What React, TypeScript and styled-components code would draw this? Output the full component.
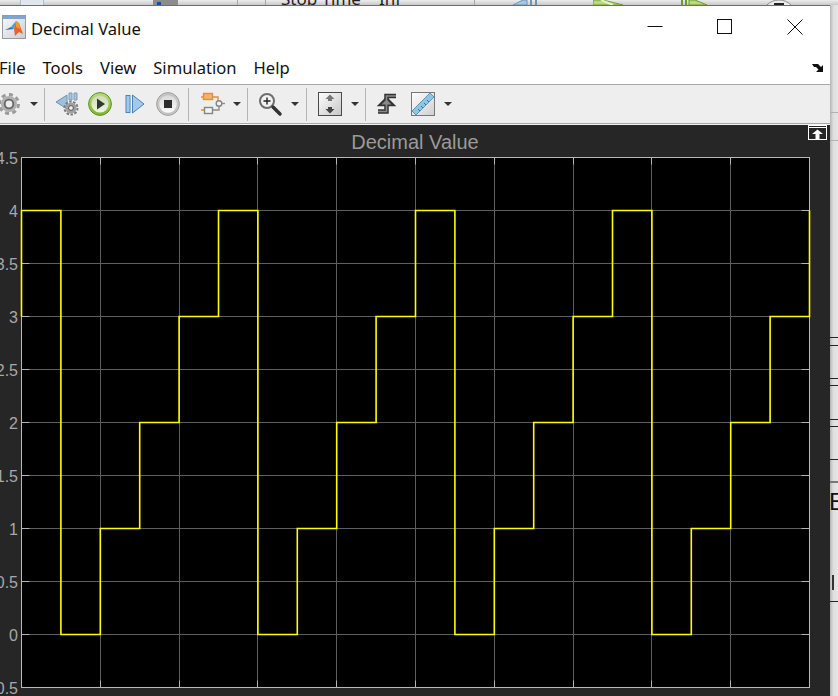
import React from 'react';
import styled, { createGlobalStyle } from 'styled-components';

const GlobalStyle = createGlobalStyle`
  html, body {
    margin: 0;
    padding: 0;
    width: 838px;
    height: 696px;
    overflow: hidden;
    background: #dcdcdc;
  }
`;

const App = () => {
  return (
    <Page>
      <GlobalStyle />
      <BehindStrip>
        <PeekBox $gap={20} />
        <PeekDark $gap={109}>
          <PeekDot />
        </PeekDark>
        <PeekDivider $gap={59} />
        <PeekDivider $gap={27} />
        <PeekText $gap={15} $width={98}>Stop Time</PeekText>
        <PeekText $gap={0} $width={95}>Inf</PeekText>
        <PeekDivider $gap={0} />
        <PeekIcon $gap={38} viewBox="0 0 30 5" $width={30}>
          <path d="M0 5 L10 0 H14 V5 Z" fill="#a8c8e0" stroke="#6d94b5" />
          <path d="M18 0 V5 M23 0 V5" stroke="#6d94b5" strokeWidth="2" />
        </PeekIcon>
        <PeekIcon $gap={50} viewBox="0 0 32 5" $width={32}>
          <path d="M0 0 H10 L30 5 H0 Z" fill="#b7da7c" stroke="#6d9a35" />
          <path d="M8 0 L20 5" stroke="#e4f2c8" strokeWidth="2" />
        </PeekIcon>
        <PeekIcon $gap={56} viewBox="0 0 27 5" $width={27}>
          <path d="M1 0 V5 M5 0 V5" stroke="#6d9a35" strokeWidth="2" />
          <path d="M8 0 H14 L26 5 H8 Z" fill="#b7da7c" stroke="#6d9a35" />
        </PeekIcon>
        <PeekIcon $gap={53} viewBox="0 0 36 5" $width={36}>
          <circle cx="18" cy="17" r="17" fill="#ececec" stroke="#8a8a8a" />
          <rect x="13" y="3" width="10" height="3" fill="#222" />
        </PeekIcon>
      </BehindStrip>

      <Body>
        <ScopeWindow>
          <TitleBar>
            <TitleLeft>
              <MatlabIcon />
              <TitleText>Decimal Value</TitleText>
            </TitleLeft>
            <WindowControls>
              <ControlButton>
                <svg width="16" height="16" viewBox="0 0 16 16">
                  <path d="M0.5 7.5 H15.5" stroke="#111" />
                </svg>
              </ControlButton>
              <ControlButton>
                <svg width="16" height="16" viewBox="0 0 16 16">
                  <rect x="0.5" y="0.5" width="14" height="14" fill="none" stroke="#111" />
                </svg>
              </ControlButton>
              <ControlButton>
                <svg width="16" height="16" viewBox="0 0 16 16">
                  <path d="M0.5 0.5 L15.5 15.5 M15.5 0.5 L0.5 15.5" stroke="#111" />
                </svg>
              </ControlButton>
            </WindowControls>
          </TitleBar>

          <MenuBar>
            <MenuList>
              <MenuItem>File</MenuItem>
              <MenuItem>Tools</MenuItem>
              <MenuItem>View</MenuItem>
              <MenuItem>Simulation</MenuItem>
              <MenuItem>Help</MenuItem>
            </MenuList>
            <svg width="12" height="10" viewBox="0 0 12 10">
              <path d="M0 1 H6 L9 4 L11 2 V9 H4 L6.5 6.5 L4 4 H2 Z" fill="#111" />
            </svg>
          </MenuBar>

          <Toolbar>
            <ToolIcon $gap={-2}><GearIcon /></ToolIcon>
            <Caret $gap={8} />
            <ToolSeparator $gap={6} />
            <ToolIcon $gap={10}><StepBackIcon /></ToolIcon>
            <ToolIcon $gap={9}><PlayIcon /></ToolIcon>
            <ToolIcon $gap={11}><StepForwardIcon /></ToolIcon>
            <ToolIcon $gap={9}><StopIcon /></ToolIcon>
            <ToolSeparator $gap={8} />
            <ToolIcon $gap={12}><BlockIcon /></ToolIcon>
            <Caret $gap={8} />
            <ToolSeparator $gap={6} />
            <ToolIcon $gap={10}><MagnifierIcon /></ToolIcon>
            <Caret $gap={9} />
            <ToolSeparator $gap={7} />
            <ToolIcon $gap={11}><FitIcon /></ToolIcon>
            <Caret $gap={9} />
            <ToolSeparator $gap={6} />
            <ToolIcon $gap={9}><TriggerIcon /></ToolIcon>
            <ToolIcon $gap={12}><RulerIcon /></ToolIcon>
            <Caret $gap={9} />
          </Toolbar>

          <ScopePanel>
            <UndockButton>
              <svg width="17" height="13" viewBox="0 0 17 13">
                <path d="M0 1.5 H17" stroke="#fff" />
                <path d="M8.5 3.5 L14 8 H10.5 V13 H6.5 V8 H3 Z" fill="#fff" />
              </svg>
            </UndockButton>
            <PlotTitle>Decimal Value</PlotTitle>
            <ScopePlot />
          </ScopePanel>
        </ScopeWindow>

        <SideStrip>
          {sideRules.map((rule, i) => (
            <SideRule key={i} $gap={rule.gap} $color={rule.color} $height={rule.height} />
          ))}
          <SideLetter>E</SideLetter>
          <SideBar />
          <SideRule $gap={11} $color="#222" $height={1} />
        </SideStrip>
      </Body>
    </Page>
  );
};
export default App;

const sideRules = [
  { gap: 107, color: '#b0b0b0', height: 1 },
  { gap: 27, color: '#b0b0b0', height: 1 },
  { gap: 196, color: '#222', height: 1 },
  { gap: 7, color: '#222', height: 1 },
  { gap: 32, color: '#222', height: 1 },
  { gap: 6, color: '#222', height: 1 },
  { gap: 33, color: '#222', height: 1 },
  { gap: 6, color: '#222', height: 1 },
  { gap: 32, color: '#222', height: 1 },
  { gap: 21, color: '#777', height: 2 },
];

// plot geometry, same numbers as the page coordinates
const LEFT = 21.5;
const RIGHT = 809.5;
const TOP = 157.5;
const BOTTOM = 687.5;
const X_STEP = (RIGHT - LEFT) / 10;
const Y_STEP = (BOTTOM - TOP) / 10;

const gridX = Array.from({ length: 9 }, (_, i) => Math.round(LEFT + X_STEP * (i + 1) - 0.5) + 0.5);
const gridY = Array.from({ length: 9 }, (_, i) => Math.round(TOP + Y_STEP * (i + 1) - 0.5) + 0.5);
const yLabels = ['4.5', '4', '3.5', '3', '2.5', '2', '1.5', '1', '0.5', '0', '-0.5'];

const valueY = (v: number) => TOP + (4.5 - v) * Y_STEP * 2;

const signalPath = () => {
  const sequence = [4, 0, 1, 2, 3];
  let d = `M${LEFT} ${valueY(3)}`;
  for (let i = 0; i < 20; i++) {
    const v = sequence[i % 5];
    const x1 = LEFT + (i * X_STEP) / 2;
    const x2 = LEFT + ((i + 1) * X_STEP) / 2;
    d += ` L${x1} ${valueY(v)} L${x2} ${valueY(v)}`;
  }
  return `${d} L${RIGHT} ${valueY(4)}`;
};

const ScopePlot = () => (
  <PlotSvg viewBox={`0 157 830 539`}>
    <rect x={LEFT} y={TOP} width={RIGHT - LEFT} height={BOTTOM - TOP} fill="#000" />
    {gridX.map((x) => (
      <g key={x}>
        <path d={`M${x} ${TOP} V${BOTTOM}`} stroke="#5f5f5f" />
        <path d={`M${x} ${TOP} v7 M${x} ${BOTTOM} v-7`} stroke="#b4b4b4" />
      </g>
    ))}
    {gridY.map((y) => (
      <g key={y}>
        <path d={`M${LEFT} ${y} H${RIGHT}`} stroke="#5f5f5f" />
        <path d={`M${LEFT} ${y} h8 M${RIGHT} ${y} h-8`} stroke="#b4b4b4" />
      </g>
    ))}
    <rect x={LEFT} y={TOP} width={RIGHT - LEFT} height={BOTTOM - TOP} fill="none" stroke="#b8b8b8" />
    <path d={signalPath()} fill="none" stroke="#ffff00" strokeWidth="1.6" />
    {yLabels.map((label, i) => (
      <TickLabel key={label} x="18" y={TOP + i * Y_STEP + 6} textAnchor="end">
        {label}
      </TickLabel>
    ))}
  </PlotSvg>
);

const MatlabIcon = () => (
  <svg width="24" height="24" viewBox="0 0 24 24">
    <defs>
      <linearGradient id="boxFill" x1="0" y1="0" x2="1" y2="1">
        <stop offset="0" stopColor="#fafafa" />
        <stop offset="1" stopColor="#c9ced6" />
      </linearGradient>
    </defs>
    <rect x="0.5" y="0.5" width="23" height="23" fill="url(#boxFill)" stroke="#9a9a9a" />
    <rect x="1" y="1" width="22" height="3" fill="#7ea6cf" />
    <path d="M3 15 L9 12 L12 14 Z" fill="#2f6fb5" />
    <path d="M9 12 L14 6 L12 14 Z" fill="#4f9bd0" />
    <path d="M14 6 L17 8 L21 19 L17 17 L13 21 L12 14 Z" fill="#e8622a" />
    <path d="M14 6 L17 8 L18 14 L14 12 Z" fill="#f29a2e" />
  </svg>
);

const GearIcon = () => (
  <svg width="24" height="24" viewBox="0 0 24 24">
    <circle cx="11" cy="12" r="9.5" fill="none" stroke="#9a9a9a" strokeWidth="3" strokeDasharray="4 3.4" />
    <circle cx="11" cy="12" r="8" fill="#b0b0b0" />
    <circle cx="11" cy="12" r="5.2" fill="#666" />
    <circle cx="11" cy="12" r="3.4" fill="#ececec" />
  </svg>
);

const StepBackIcon = () => (
  <svg width="26" height="24" viewBox="0 0 26 24">
    <path d="M14 1 H17 V8 H14 Z M19 1 H22 V8 H19 Z" fill="#a9c6df" stroke="#7b9ab5" />
    <path d="M12 3 V17 L1 10 Z" fill="#9ec0dd" stroke="#7094b4" />
    <circle cx="16" cy="16" r="6.5" fill="none" stroke="#7c7c7c" strokeWidth="2" strokeDasharray="2.5 1.5" />
    <circle cx="16" cy="16" r="5.6" fill="#a0a0a0" />
    <circle cx="16" cy="16" r="2.4" fill="#efefef" stroke="#555" />
  </svg>
);

const PlayIcon = () => (
  <svg width="24" height="24" viewBox="0 0 24 24">
    <defs>
      <linearGradient id="playRing" x1="0" y1="0" x2="0" y2="1">
        <stop offset="0" stopColor="#b9dc78" />
        <stop offset="1" stopColor="#7fb52f" />
      </linearGradient>
      <linearGradient id="playCore" x1="0" y1="0" x2="0" y2="1">
        <stop offset="0" stopColor="#cfd8bd" />
        <stop offset="1" stopColor="#f1f5e2" />
      </linearGradient>
    </defs>
    <circle cx="12" cy="12" r="11.4" fill="url(#playRing)" stroke="#5f8f25" />
    <circle cx="12" cy="12" r="8.6" fill="url(#playCore)" />
    <path d="M9 6.5 L17 12 L9 17.5 Z" fill="#2f3a2a" />
  </svg>
);

const StepForwardIcon = () => (
  <svg width="24" height="24" viewBox="0 0 24 24">
    <rect x="3" y="3.5" width="4" height="17" fill="#a3c9ea" stroke="#4a84bb" />
    <path d="M9.5 3 L21 12 L9.5 21 Z" fill="#a3c9ea" stroke="#4a84bb" />
  </svg>
);

const StopIcon = () => (
  <svg width="24" height="24" viewBox="0 0 24 24">
    <defs>
      <linearGradient id="stopCore" x1="0" y1="0" x2="0" y2="1">
        <stop offset="0" stopColor="#d8d8d8" />
        <stop offset="1" stopColor="#fbfbfb" />
      </linearGradient>
    </defs>
    <circle cx="12" cy="12" r="11.4" fill="#c4c4c4" stroke="#a2a2a2" />
    <circle cx="12" cy="12" r="8.8" fill="url(#stopCore)" />
    <rect x="8" y="8" width="8" height="8" fill="#2d2d2d" />
  </svg>
);

const BlockIcon = () => (
  <svg width="24" height="24" viewBox="0 0 24 24">
    <path d="M10 5 H17 V9" fill="none" stroke="#e08f3a" strokeWidth="1.4" />
    <path d="M12 18 H18 V14" fill="none" stroke="#8d8d8d" strokeWidth="1.4" />
    <path d="M0 5 H2 M0 18 H3" stroke="#e08f3a" strokeWidth="1.4" />
    <rect x="2.5" y="1.5" width="9" height="6" fill="#f6b262" stroke="#e5902f" strokeWidth="1.4" />
    <rect x="3.5" y="15.5" width="8" height="6" fill="#f4f4f4" stroke="#858585" strokeWidth="1.4" />
    <circle cx="18" cy="11.5" r="2.8" fill="#f4f4f4" stroke="#858585" strokeWidth="1.4" />
    <path d="M20.5 11.5 H24" stroke="#8d8d8d" strokeWidth="1.4" />
  </svg>
);

const MagnifierIcon = () => (
  <svg width="24" height="24" viewBox="0 0 24 24">
    <circle cx="9" cy="9" r="7" fill="#f2f2f2" stroke="#6e6e6e" strokeWidth="2" />
    <path d="M5.5 9 H12.5 M9 5.5 V12.5" stroke="#222" strokeWidth="1.4" />
    <path d="M15 15 L22 22" stroke="#333" strokeWidth="3.4" strokeLinecap="round" />
  </svg>
);

const FitIcon = () => (
  <svg width="24" height="24" viewBox="0 0 24 24">
    <defs>
      <linearGradient id="fitFill" x1="0" y1="0" x2="1" y2="1">
        <stop offset="0" stopColor="#fff" />
        <stop offset="1" stopColor="#c6c6c6" />
      </linearGradient>
    </defs>
    <rect x="0.5" y="0.5" width="23" height="23" fill="url(#fitFill)" stroke="#4a4a4a" />
    <path d="M12 2.5 L16.5 7 H14 V9 H10 V7 H7.5 Z" fill="#777" />
    <path d="M12 21.5 L16.5 17 H14 V15 H10 V17 H7.5 Z" fill="#444" />
  </svg>
);

const TriggerIcon = () => (
  <svg width="24" height="24" viewBox="0 0 24 24">
    <path d="M3 19.5 H11.5 V4 H21" fill="none" stroke="#333" strokeWidth="4.5" />
    <path d="M3.5 13.5 L11.5 5.5 L19.5 13.5 Z" fill="#333" stroke="#333" strokeWidth="1.5" />
    <path d="M3 19.5 H11.5 V4 H21" fill="none" stroke="#8a8a8a" strokeWidth="1.6" />
    <path d="M6.5 12.5 L11.5 7.5 L16.5 12.5 Z" fill="#8a8a8a" />
  </svg>
);

const RulerIcon = () => (
  <svg width="24" height="24" viewBox="0 0 24 24">
    <defs>
      <linearGradient id="rulerFill" x1="0" y1="0" x2="1" y2="1">
        <stop offset="0" stopColor="#fff" />
        <stop offset="1" stopColor="#cfcfcf" />
      </linearGradient>
    </defs>
    <rect x="0.5" y="0.5" width="23" height="23" fill="url(#rulerFill)" stroke="#777" />
    <path d="M5 23 L1 19 L19 1 L23 5 Z" fill="#8cc6e4" stroke="#5b98bb" />
    <path d="M7 17 L9 19 M10 14 L12 16 M13 11 L15 13 M16 8 L18 10" stroke="#3d7492" />
  </svg>
);

// Style component
const Page = styled.div`
  width: 838px;
  height: 696px;
  overflow: hidden;
  display: flex;
  flex-direction: column;
`;

const BehindStrip = styled.div`
  height: 5px;
  flex: none;
  display: flex;
  overflow: hidden;
  background: linear-gradient(#ececec, #c9c9c9);
`;

const PeekBox = styled.div<{ $gap: number }>`
  width: 22px;
  height: 5px;
  margin-left: ${(p) => p.$gap}px;
  border: 1px solid #a9bfd3;
  border-top: 0;
  background: #dfe6ee;
`;

const PeekDark = styled.div<{ $gap: number }>`
  width: 25px;
  height: 5px;
  margin-left: ${(p) => p.$gap}px;
  background: #8c8c8c;
  position: relative;
`;

const PeekDot = styled.div`
  position: absolute;
  left: 4px;
  bottom: 0;
  width: 4px;
  height: 3px;
  background: #1350a8;
`;

const PeekDivider = styled.div<{ $gap: number }>`
  width: 1px;
  height: 5px;
  margin-left: ${(p) => p.$gap}px;
  background: #a6a6a6;
`;

const PeekText = styled.div<{ $gap: number; $width: number }>`
  width: ${(p) => p.$width}px;
  height: 5px;
  margin-left: ${(p) => p.$gap}px;
  font: 17px/1 'Noto Sans', sans-serif;
  color: #222;
  white-space: nowrap;
  box-sizing: border-box;
  margin-top: -10px;
`;

const PeekIcon = styled.svg<{ $gap: number; $width: number }>`
  display: block;
  flex: none;
  width: ${(p) => p.$width}px;
  height: 5px;
  margin-left: ${(p) => p.$gap}px;
`;

const Body = styled.div`
  flex: 1;
  display: flex;
  min-height: 0;
`;

const ScopeWindow = styled.div`
  width: 830px;
  flex: none;
  display: flex;
  flex-direction: column;
  background: #fff;
  border-top: 1px solid #6e6e6e;
  box-sizing: border-box;
`;

const TitleBar = styled.div`
  height: 42px;
  flex: none;
  display: flex;
  align-items: center;
  justify-content: space-between;
`;

const TitleLeft = styled.div`
  display: flex;
  align-items: center;
  gap: 5px;
  padding-left: 2px;
`;

const TitleText = styled.span`
  font: 16.6px 'Noto Sans', sans-serif;
  color: #111;
  padding-top: 3px;
`;

const WindowControls = styled.div`
  display: flex;
`;

const ControlButton = styled.div`
  width: 70px;
  height: 42px;
  display: flex;
  align-items: center;
  justify-content: center;

  svg {
    display: block;
  }
`;

const MenuBar = styled.div`
  height: 37px;
  flex: none;
  display: flex;
  align-items: center;
  justify-content: space-between;
  padding: 3px 6px 0 0;
  box-sizing: border-box;
  border-bottom: 1px solid #a8a8a8;
`;

const MenuList = styled.div`
  display: flex;
  gap: 17px;
  margin-left: -1px;
`;

const MenuItem = styled.span`
  font: 16.6px 'Noto Sans', sans-serif;
  color: #111;
`;

const Toolbar = styled.div`
  height: 39px;
  flex: none;
  display: flex;
  align-items: center;
  background: #eeeeee;
  border-bottom: 1px solid #a8a8a8;
  box-sizing: border-box;
`;

const ToolIcon = styled.div<{ $gap: number }>`
  width: 24px;
  height: 24px;
  flex: none;
  margin-left: ${(p) => p.$gap}px;

  svg {
    display: block;
    overflow: visible;
  }
`;

const Caret = styled.div<{ $gap: number }>`
  width: 0;
  height: 0;
  flex: none;
  margin-left: ${(p) => p.$gap}px;
  border-left: 4px solid transparent;
  border-right: 4px solid transparent;
  border-top: 4px solid #333;
`;

const ToolSeparator = styled.div<{ $gap: number }>`
  width: 1px;
  height: 33px;
  flex: none;
  margin-left: ${(p) => p.$gap}px;
  background: #b4b4b4;
`;

const ScopePanel = styled.div`
  flex: 1;
  min-height: 0;
  background: #262626;
  position: relative;
  border-top: 1px solid #f4f4f4;
`;

const UndockButton = styled.div`
  position: absolute;
  top: 0;
  right: 3px;
  width: 19px;
  height: 15px;
  box-sizing: border-box;
  border: 1px solid #fff;
  display: flex;
`;

const PlotTitle = styled.div`
  height: 32px;
  text-align: center;
  font: 20px/34px 'Liberation Sans', Arial, sans-serif;
  color: #9a9a9a;
`;

const PlotSvg = styled.svg`
  display: block;
  width: 830px;
  height: 539px;
  overflow: visible;
`;

const TickLabel = styled.text`
  font: 16px 'Liberation Sans', Arial, sans-serif;
  fill: #a8a8a8;
`;

const SideStrip = styled.div`
  flex: 1;
  overflow: hidden;
  background: linear-gradient(90deg, #b4b4b4, #dedede 40%, #e6e6e6);
`;

const SideRule = styled.div<{ $gap: number; $color: string; $height: number }>`
  margin-top: ${(p) => p.$gap}px;
  height: ${(p) => p.$height}px;
  background: ${(p) => p.$color};
`;

const SideLetter = styled.div`
  margin: 7px 0 0 -1px;
  height: 24px;
  font: 24px/24px 'Liberation Sans', Arial, sans-serif;
  color: #111;
`;

const SideBar = styled.div`
  margin: 61px 0 0 2px;
  width: 2px;
  height: 15px;
  background: #333;
`;
